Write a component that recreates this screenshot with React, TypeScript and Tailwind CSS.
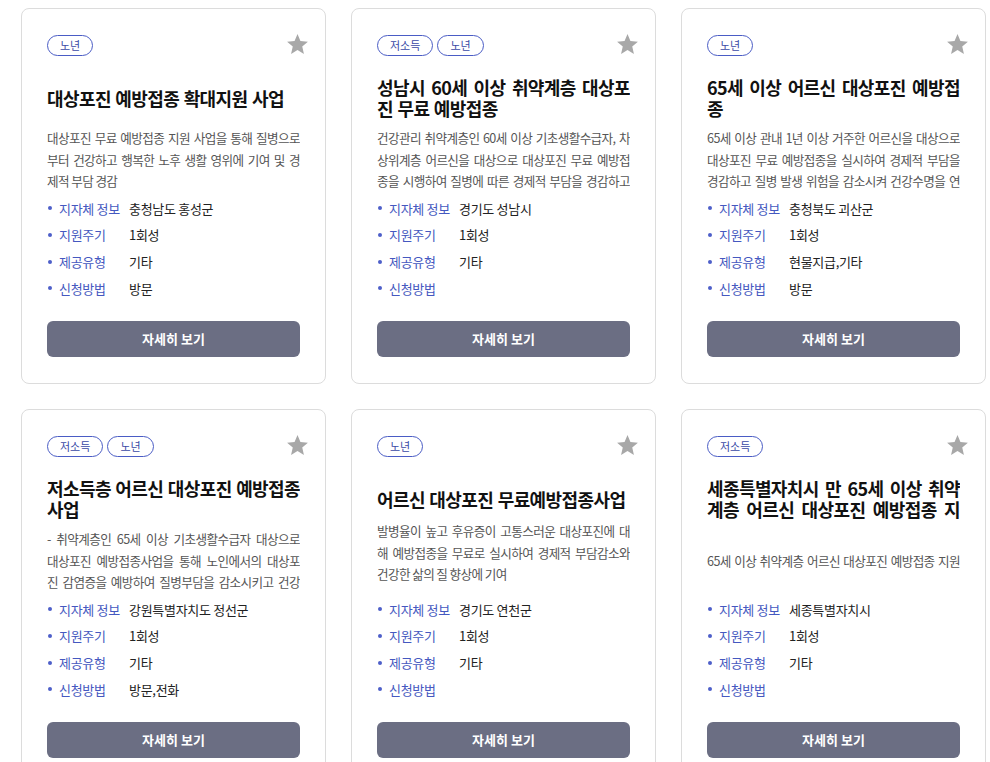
import React from "react";

type Card = {
  tags: string[];
  title: string;
  lines: string[];
  lastFull?: boolean;
  region: string;
  cycle: string;
  kind: string;
  method: string;
  descBox?: string;
};

const cards: Card[] = [
  {
    tags: ["노년"],
    title: "대상포진 예방접종 확대지원 사업",
    lines: [
      "대상포진 무료 예방접종 지원 사업을 통해 질병으로",
      "부터 건강하고 행복한 노후 생활 영위에 기여 및 경",
      "제적 부담 경감",
    ],
    region: "충청남도 홍성군",
    cycle: "1회성",
    kind: "기타",
    method: "방문",
  },
  {
    tags: ["저소득", "노년"],
    title: "성남시 60세 이상 취약계층 대상포진 무료 예방접종",
    lines: [
      "건강관리 취약계층인 60세 이상 기초생활수급자, 차",
      "상위계층 어르신을 대상으로 대상포진 무료 예방접",
      "종을 시행하여 질병에 따른 경제적 부담을 경감하고",
    ],
    lastFull: true,
    region: "경기도 성남시",
    cycle: "1회성",
    kind: "기타",
    method: "",
  },
  {
    tags: ["노년"],
    title: "65세 이상 어르신 대상포진 예방접종",
    lines: [
      "65세 이상 관내 1년 이상 거주한 어르신을 대상으로",
      "대상포진 무료 예방접종을 실시하여 경제적 부담을",
      "경감하고 질병 발생 위험을 감소시켜 건강수명을 연",
    ],
    lastFull: true,
    region: "충청북도 괴산군",
    cycle: "1회성",
    kind: "현물지급,기타",
    method: "방문",
  },
  {
    tags: ["저소득", "노년"],
    title: "저소득층 어르신 대상포진 예방접종 사업",
    lines: [
      "- 취약계층인 65세 이상 기초생활수급자 대상으로",
      "대상포진 예방접종사업을 통해 노인에서의 대상포",
      "진 감염증을 예방하여 질병부담을 감소시키고 건강",
    ],
    lastFull: true,
    region: "강원특별자치도 정선군",
    cycle: "1회성",
    kind: "기타",
    method: "방문,전화",
  },
  {
    tags: ["노년"],
    title: "어르신 대상포진 무료예방접종사업",
    lines: [
      "발병율이 높고 후유증이 고통스러운 대상포진에 대",
      "해 예방접종을 무료로 실시하여 경제적 부담감소와",
      "건강한 삶의 질 향상에 기여",
    ],
    region: "경기도 연천군",
    cycle: "1회성",
    kind: "기타",
    method: "",
    descBox: "mt-[-3px] h-[72px]",
  },
  {
    tags: ["저소득"],
    title: "세종특별자치시 만 65세 이상 취약계층 어르신 대상포진 예방접종 지원사업",
    lines: ["", "65세 이상 취약계층 어르신 대상포진 예방접종 지원"],
    lastFull: true,
    region: "세종특별자치시",
    cycle: "1회성",
    kind: "기타",
    method: "",
  },
];

function Star() {
  return (
    <svg
      viewBox="0 0 24 24"
      className="absolute right-[15px] top-[23px] h-[25px] w-[25px]"
      fill="#a8a8a8"
    >
      <path d="M12 17.27L18.18 21l-1.64-7.03L22 9.24l-7.19-.61L12 2 9.19 8.63 2 9.24l5.46 4.73L5.82 21z" />
    </svg>
  );
}

function InfoRow({ label, value }: { label: string; value: string }) {
  return (
    <li className="flex h-[26.7px] items-center text-[13px] tracking-[-0.3px]">
      <span className="mr-[7px] ml-[1px] h-[4px] w-[4px] rounded-full bg-[#4d5fc9]" />
      <span className="w-[70px] text-[#4558c0]">{label}</span>
      <span className="text-[#222]">{value}</span>
    </li>
  );
}

function CardView({ c }: { c: Card }) {
  return (
    <div className="relative flex h-[376px] w-[305px] flex-col rounded-[8px] border border-[#dcdcdc] bg-white px-[25px] pt-[26px]">
      <Star />
      <div className="flex h-[21px] gap-[4px]">
        {c.tags.map((t) => (
          <span
            key={t}
            className="flex h-[21px] items-center rounded-full border border-[#4a5cc5] px-[12px] text-[11px] leading-none text-[#3b4aa6]"
          >
            {t}
          </span>
        ))}
      </div>
      <div className="mt-[18px] flex h-[48px] items-center">
        <h3 className="max-h-[42px] overflow-hidden text-justify text-[18px] font-bold leading-[21px] tracking-[-0.6px] [word-spacing:1px] break-all text-[#111]">
          {c.title}
        </h3>
      </div>
      <div className={`overflow-hidden ${c.descBox ?? "mt-[5px] h-[64px]"}`}>
        <p className="text-[12.6px] leading-[21.5px] tracking-[-0.6px] text-[#555]">
          {c.lines.map((l, i) => {
            const full = i < c.lines.length - 1 || c.lastFull;
            return (
              <span
                key={i}
                className={
                  full
                    ? "block h-[21.5px] text-justify [text-align-last:justify]"
                    : "block h-[21.5px]"
                }
              >
                {l}
              </span>
            );
          })}
        </p>
      </div>
      <ul className="mt-[4px]">
        <InfoRow label="지자체 정보" value={c.region} />
        <InfoRow label="지원주기" value={c.cycle} />
        <InfoRow label="제공유형" value={c.kind} />
        <InfoRow label="신청방법" value={c.method} />
      </ul>
      <button className="mt-[19px] h-[36px] w-full rounded-[6px] bg-[#6b6e83] text-[13px] font-bold text-white">
        자세히 보기
      </button>
    </div>
  );
}

export default function App() {
  return (
    <div
      className="h-[762px] overflow-hidden bg-white pt-[8px] pl-[21px]"
      style={{ fontFamily: '"Noto Sans CJK KR", "Noto Sans", sans-serif' }}
    >
      <div className="grid grid-cols-[305px_305px_305px] gap-x-[25px] gap-y-[25px]">
        {cards.map((c, i) => (
          <CardView key={i} c={c} />
        ))}
      </div>
    </div>
  );
}
